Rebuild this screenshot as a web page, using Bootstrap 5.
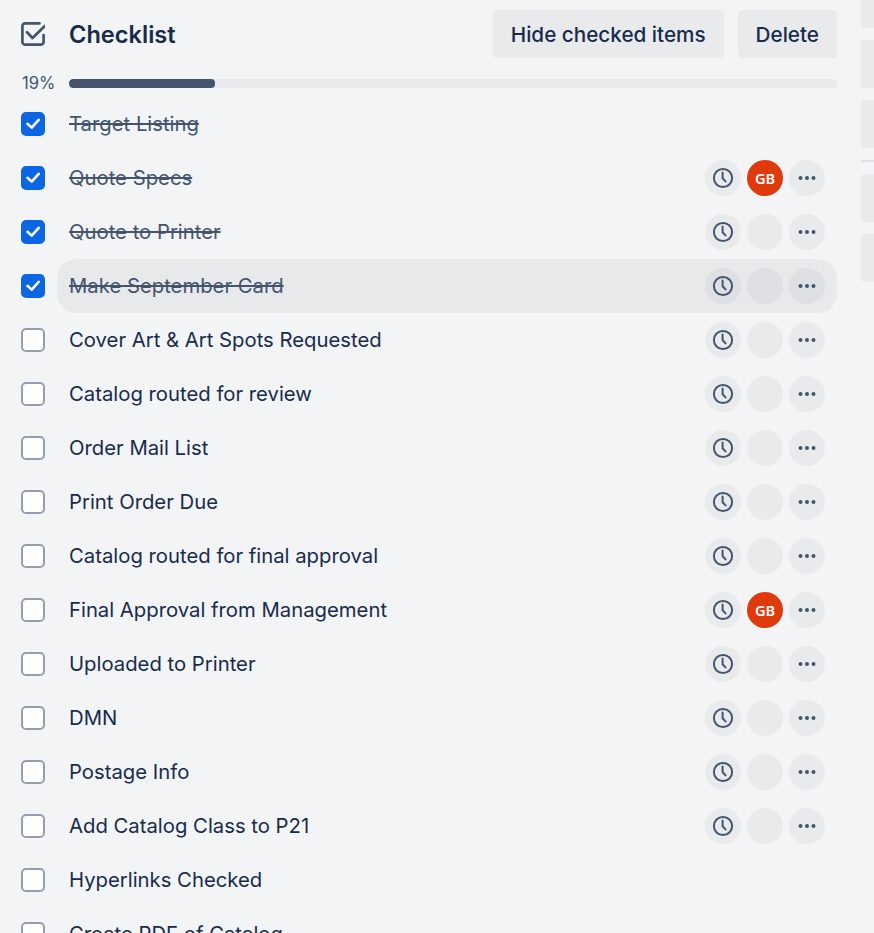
<!doctype html>
<html lang="en">
<head>
<meta charset="utf-8">
<title>Checklist</title>
<link href="https://cdn.jsdelivr.net/npm/bootstrap@5.3.0/dist/css/bootstrap.min.css" rel="stylesheet">
<style>
html,body{height:933px;overflow:hidden}
body{background:#f3f4f6;color:#172b4d;font-family:Inter,"Liberation Sans",sans-serif;font-size:20.3px;line-height:28px}
.shell{width:874px;height:933px;overflow:hidden}
.main-col{width:816px;margin-left:21px;flex:none}
.side-col{width:60px;margin-left:24px;margin-top:-20px;flex:none}
.side-btn{height:48px;background:#e9eaec;border-radius:4px;margin-bottom:12px;flex:none}
.side-rule{height:2px;background:#dcdfe4;margin-bottom:12px;flex:none}
.head{padding-top:10px;height:74px}
.head-ico{width:24px;height:24px;margin:12px 24px 0 0;flex:none}
.head-title{font-size:23.6px;font-weight:600;line-height:50px;color:#172b4d}
.act{background:#e9eaec;color:#172b4d;border:0;border-radius:4px;height:48px;font-size:20.7px;font-weight:500;padding:0 18px;line-height:49px}
.act:hover{background:#dcdfe4;color:#172b4d}
.act-gap{margin-right:14px}
.pct{width:48px;font-size:16.6px;line-height:18px;color:#44546f;flex:none;padding-left:1px}
.bar{height:9px;background:#e9eaec;border-radius:4px;flex:1 1 auto}
.bar .progress-bar{background:#44546f;border-radius:4px}
.prog-row{height:18px;margin-bottom:5px}
.item{height:54px}
.item-check{width:24px;height:24px;margin:0 12px 0 0;flex:none;border:2px solid #949eb0;border-radius:3px;background-color:#fff}
.item-check:checked{background-color:#0c66e4;border-color:#0c66e4;background-size:24px 24px;background-position:-2px -2px;background-image:url("data:image/svg+xml,%3csvg xmlns='http://www.w3.org/2000/svg' viewBox='0 0 24 24'%3e%3cpath fill='none' stroke='%23fff' stroke-width='2.6' stroke-linecap='round' stroke-linejoin='round' d='M6.500 11.800l4.200 3.800 7-7.800'/%3e%3c/svg%3e")}
.item-body{height:54px;padding:0 12px;border-radius:20px}
.item-body.hov{background:#e8e9eb}
.item-text{line-height:28px;white-space:nowrap}
.item-text.done{color:#44546f;text-decoration:line-through}
.btn-set{gap:6px}
.round{width:36px;height:36px;border-radius:50%;background:#e9eaec;flex:none}
.hov .round{background:#dfe0e3}
.initials{background:#e03a0c;color:#fff;font-family:"Noto Sans",sans-serif;font-size:14.6px;font-weight:600;line-height:36px;text-align:center}
</style>
</head>
<body>
<svg width="0" height="0" class="d-block" aria-hidden="true">
  <symbol id="clk" viewBox="0 0 24 24"><circle cx="12" cy="12" r="9.100" fill="none" stroke="#44546f" stroke-width="2"/><path d="M11.600 6.600v5.600l3 3.200" fill="none" stroke="#44546f" stroke-width="2" stroke-linecap="round" stroke-linejoin="round"/></symbol>
  <symbol id="dts" viewBox="0 0 24 24"><circle cx="5.500" cy="12" r="2" fill="#44546f"/><circle cx="12" cy="12" r="2" fill="#44546f"/><circle cx="18.500" cy="12" r="2" fill="#44546f"/></symbol>
</svg>
<div class="shell d-flex">
  <div class="main-col">
    <div class="head d-flex align-items-start">
      <svg class="head-ico" viewBox="0 0 24 24"><path d="M18.500 1.400H4A2.600 2.600 0 0 0 1.400 4V20A2.600 2.600 0 0 0 4 22.600H20A2.600 2.600 0 0 0 22.600 20V13" fill="none" stroke="#44546f" stroke-width="2.700" stroke-linecap="round"/><path d="M6 10.200l5.500 5.800L23.800 4" fill="none" stroke="#44546f" stroke-width="2.700" stroke-linecap="round" stroke-linejoin="round"/></svg>
      <div class="head-title flex-grow-1">Checklist</div>
      <button class="btn act act-gap" type="button">Hide checked items</button>
      <button class="btn act" type="button">Delete</button>
    </div>
    <div class="prog-row d-flex align-items-center">
      <div class="pct">19%</div>
      <div class="progress bar"><div class="progress-bar" style="width:19%"></div></div>
    </div>
    <div id="list"></div>
  </div>
  <div class="side-col d-flex flex-column">
    <div class="side-btn"></div><div class="side-btn"></div><div class="side-btn"></div>
    <div class="side-rule"></div>
    <div class="side-btn"></div><div class="side-btn"></div>
  </div>
</div>
<script>
var items=[["Target Listing",1,0],["Quote Specs",1,2],["Quote to Printer",1,1],["Make September Card",1,1,1],["Cover Art & Art Spots Requested",0,1],["Catalog routed for review",0,1],["Order Mail List",0,1],["Print Order Due",0,1],["Catalog routed for final approval",0,1],["Final Approval from Management",0,2],["Uploaded to Printer",0,1],["DMN",0,1],["Postage Info",0,1],["Add Catalog Class to P21",0,1],["Hyperlinks Checked",0,0],["Create PDF of Catalog",0,0]];
document.getElementById('list').innerHTML=items.map(function(i){
  var btns=i[2]?'<div class="d-flex btn-set"><div class="round clock d-flex align-items-center justify-content-center"><svg width="24" height="24"><use href="#clk"/></svg></div>'+(i[2]==2?'<div class="round initials">GB</div>':'<div class="round"></div>')+'<div class="round d-flex align-items-center justify-content-center"><svg width="24" height="24"><use href="#dts"/></svg></div></div>':'';
  return '<div class="item d-flex align-items-center"><input class="form-check-input item-check" type="checkbox" aria-label="'+i[0].replace('&','&amp;')+'"'+(i[1]?' checked':'')+'><div class="item-body flex-grow-1 d-flex align-items-center justify-content-between'+(i[3]?' hov':'')+'"><span class="item-text'+(i[1]?' done':'')+'">'+i[0].replace('&','&amp;')+'</span>'+btns+'</div></div>';
}).join('');
</script>
</body>
</html>
